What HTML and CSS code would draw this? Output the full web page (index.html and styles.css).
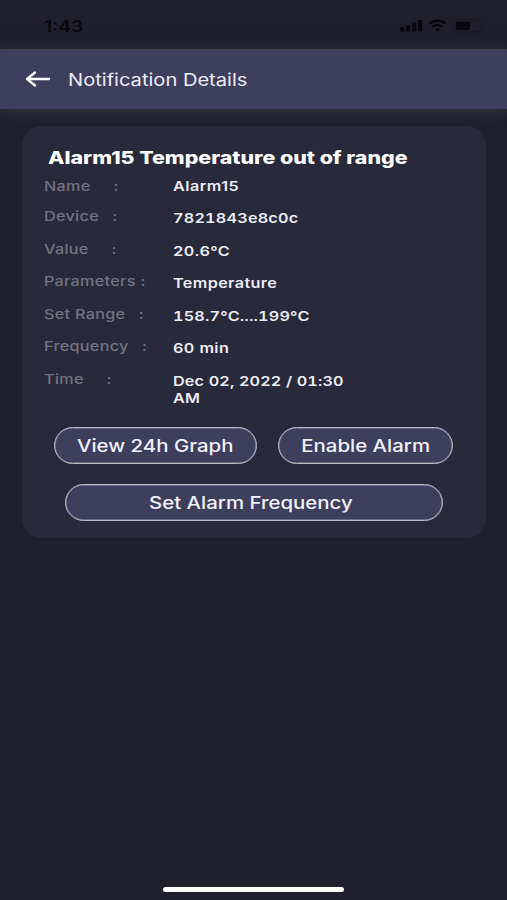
FILE: index.html
```html
<!DOCTYPE html>
<html lang="en">
<head>
<meta charset="utf-8">
<title>Notification Details</title>
<link rel="stylesheet" href="styles.css">
</head>
<body>
<div class="status">
  <span class="clock wide">1:43</span>
  <svg class="indicators" width="88" height="16" viewBox="0 0 88 16">
    <g fill="#07070d">
      <rect x="1" y="9" width="4.3" height="4.6" rx="1"/>
      <rect x="7" y="7" width="4.3" height="6.6" rx="1"/>
      <rect x="13" y="4.5" width="4.3" height="9.1" rx="1"/>
      <rect x="19" y="2" width="4.3" height="11.6" rx="1"/>
      <rect x="57" y="3.6" width="14" height="8.4" rx="2"/>
    </g>
    <g fill="none" stroke="#07070d" stroke-width="2.2">
      <path d="M29.7 5.7Q38.5-.6 47.3 5.7"/>
      <path d="M33 9Q38.500 5 44 9"/>
    </g>
    <path fill="#07070d" d="M36 11Q38.500 9.400 41 11L38.500 13.500Z"/>
    <rect x="55" y="1.700" width="27" height="12.200" rx="4" fill="none" stroke="#191926"/>
    <path d="M84.500 6Q86.500 7.800 84.500 9.600Z" fill="#191926"/>
  </svg>
</div>
<header class="bar">
  <svg class="back" width="26" height="18" viewBox="0 0 26 18" fill="none" stroke="#fff" stroke-width="2.300" stroke-linecap="round" stroke-linejoin="round"><path d="M24 9H2.500M10 2.500L2 9L10 15.500"/></svg>
  <h1 class="wide">Notification Details</h1>
</header>
<main class="card">
  <h2 class="wide">Alarm15 Temperature out of range</h2>
  <dl>
    <div class="row name"><dt class="wide">Name<i>:</i></dt><dd class="wide">Alarm15</dd></div>
    <div class="row device"><dt class="wide">Device<i>:</i></dt><dd class="wide">7821843e8c0c</dd></div>
    <div class="row value"><dt class="wide">Value<i>:</i></dt><dd class="wide">20.6°C</dd></div>
    <div class="row params"><dt class="wide">Parameters<i>:</i></dt><dd class="wide">Temperature</dd></div>
    <div class="row range"><dt class="wide">Set Range<i>:</i></dt><dd class="wide">158.7°C....199°C</dd></div>
    <div class="row freq"><dt class="wide">Frequency<i>:</i></dt><dd class="wide">60 min</dd></div>
    <div class="row time"><dt class="wide">Time<i>:</i></dt><dd class="wide">Dec 02, 2022 / 01:30<br>AM</dd></div>
  </dl>
  <div class="actions">
    <button class="graph"><span>View 24h Graph</span></button>
    <button class="enable"><span>Enable Alarm</span></button>
    <button class="frequency"><span>Set Alarm Frequency</span></button>
  </div>
</main>
<footer><div class="home"></div></footer>
</body>
</html>
```
FILE: styles.css
```css
* { box-sizing: border-box; margin: 0; padding: 0; }
html { background: #201f2e; }
body {
  width: 507px;
  height: 900px;
  overflow: hidden;
  display: flex;
  flex-direction: column;
  background: #201f2e;
  color: #ececf6;
  font-family: Inter, "Liberation Sans", sans-serif;
}
.wide { display: block; width: max-content; white-space: nowrap; transform: scaleX(1.2); transform-origin: left center; }
.status {
  height: 49px;
  flex: none;
  display: flex;
  justify-content: space-between;
  padding: 16px 20px 0 44px;
}
.clock { font-size: 16px; line-height: 20px; font-weight: 600; color: #07070d; }
.indicators { margin-top: 2px; }
.bar {
  height: 60px;
  flex: none;
  display: flex;
  align-items: center;
  padding-left: 25px;
  gap: 17px;
  background: #3e3e5d;
  box-shadow: 0 2px 14px #34343f;
  clip-path: inset(-20px 0);
}
.bar h1 { font-size: 17px; line-height: 22px; font-weight: 400; padding-top: 1px; transform: scaleX(1.182); }
.card {
  width: 464px;
  height: 412px;
  flex: none;
  margin: 17px 0 0 22px;
  padding: 21px 22px 0;
  border-radius: 19px;
  background: #28293a;
}
.card h2 { font-size: 17.5px; line-height: 22px; font-weight: 800; color: #fff; margin-left: 4px; transform: scaleX(1.222); }
dl { padding-top: 9px; }
.row { display: grid; grid-template-columns: 129px 1fr; height: 32.5px; font-size: 13.5px; line-height: 17px; }
.row dt { color: #737381; font-weight: 500; margin-top: -2px; letter-spacing: .25px; }
.row dd { font-weight: 600; letter-spacing: .3px; font-variant-numeric: tabular-nums; }
.row.name dd { font-variant-numeric: normal; letter-spacing: .4px; }
.row.device dd { letter-spacing: .18px; }
.row.range dd { letter-spacing: .17px; }
.row.time dd { letter-spacing: .12px; }
.row i { font-style: normal; margin-left: 19px; }
.row.name { height: 32px; }
.row.name dt { margin-top: 0; }
.device i { margin-left: 11px; }
.params i { margin-left: 4px; }
.range i { margin-left: 12px; }
.freq i { margin-left: 12px; }
.actions {
  display: grid;
  grid-template-columns: 203px 175px;
  column-gap: 21px;
  row-gap: 20px;
  margin: 22px 0 0 10px;
}
button {
  height: 37px;
  border: 1px solid #b8b8c6;
  box-shadow: inset 0 0 0 .5px #9696a8;
  border-radius: 19px;
  background: #3e3e5d;
  color: #f1f1fa;
  font: 500 17px/22px Inter, "Liberation Sans", sans-serif;
  white-space: nowrap;
}
button span { display: inline-block; transform: scaleX(1.2); }
.row.device i, .row.params i, .row.range i, .row.freq i { margin-left: 11px; }
.row.params i { margin-left: 4px; }
.frequency { grid-column: 1 / -1; margin: 0 10px 0 11px; padding-right: 6px; }
footer { margin-top: auto; display: flex; justify-content: center; padding: 0 0 8px; }
.home { width: 181px; height: 5px; border-radius: 3px; background: #fff; }
```
